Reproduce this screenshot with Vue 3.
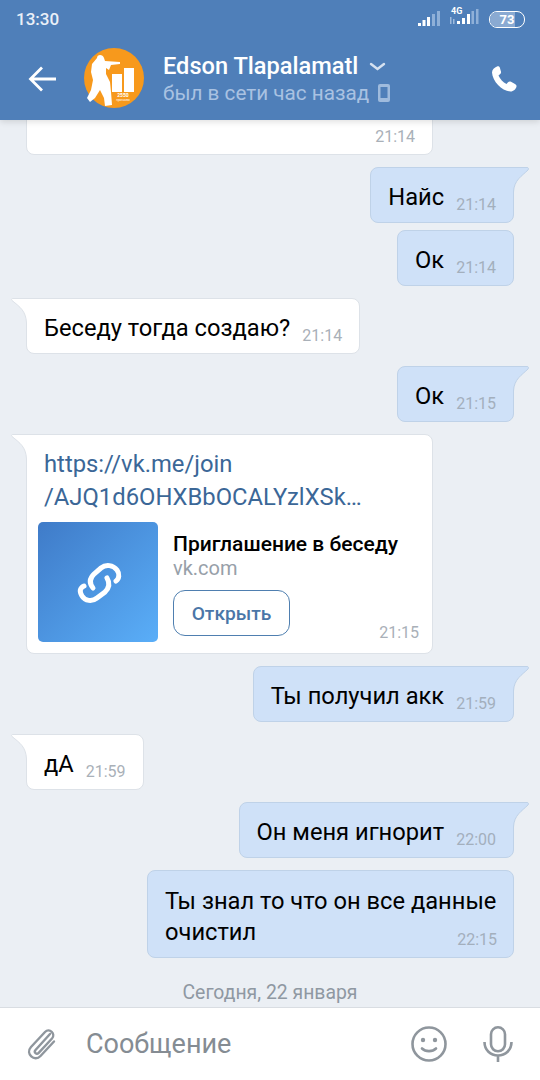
<script setup>
const messages = [
  { id: 1, side: 'in', text: '', time: '21:14', cut: true },
  { id: 2, side: 'out', text: 'Найс', time: '21:14', tail: true },
  { id: 3, side: 'out', text: 'Ок', time: '21:14', grouped: true },
  { id: 4, side: 'in', text: 'Беседу тогда создаю?', time: '21:14', tail: true },
  { id: 5, side: 'out', text: 'Ок', time: '21:15', tail: true },
  { id: 6, side: 'in', time: '21:15', tail: true, link: true },
  { id: 7, side: 'out', text: 'Ты получил акк', time: '21:59', tail: true },
  { id: 8, side: 'in', text: 'дА', time: '21:59', tail: true },
  { id: 9, side: 'out', text: 'Он меня игнорит', time: '22:00', tail: true },
  { id: 10, side: 'out', firstLine: 'Ты знал то что он все данные', text: 'очистил', time: '22:15', wrap: true }
]
</script>

<template>
<div class="screen">
  <header class="header">
    <div class="status">
      <span class="clock">13:30</span>
      <div class="status-icons">
        <svg width="22" height="16" viewBox="0 0 22 16">
          <rect x="0" y="12" width="3" height="3" fill="#fff"/>
          <rect x="4.500" y="9" width="3" height="6" fill="#fff"/>
          <rect x="9" y="6" width="3" height="9" fill="#fff"/>
          <rect x="14" y="3" width="3" height="12" fill="#8fb0d8"/>
          <rect x="19" y="0" width="3" height="15" fill="#8fb0d8"/>
        </svg>
        <div class="net">
          <span class="net-label">4G</span>
          <svg width="29" height="16" viewBox="0 0 29 16">
            <rect x="0" y="8" width="1.500" height="7" fill="#9fbbdd"/>
            <rect x="3" y="10" width="1.500" height="5" fill="#9fbbdd"/>
            <rect x="7" y="12" width="3" height="3" fill="#fff"/>
            <rect x="12" y="9" width="3" height="6" fill="#fff"/>
            <rect x="17" y="5" width="3" height="10" fill="#fff"/>
            <rect x="21.500" y="2" width="2.500" height="13" fill="#8fb0d8"/>
            <rect x="26" y="0" width="2.500" height="15" fill="#8fb0d8"/>
          </svg>
        </div>
        <div class="battery"><span class="battery-fill"></span><span class="battery-num">73</span></div>
      </div>
    </div>
    <div class="toolbar">
      <svg class="back" width="30" height="28" viewBox="0 0 30 28">
        <path d="M28 14H3M14 2.500L2.500 14L14 25.500" fill="none" stroke="#fff" stroke-width="2.800"/>
      </svg>
      <svg class="avatar" width="60" height="60" viewBox="0 0 60 60">
        <circle cx="30" cy="30" r="30" fill="#f7991c"/>
        <path d="M13 10C13 6 19 6 20 10L21 13L36 14L36 16L27 17L25 22L22 20L22 26L26 34L27 44L28 57L21 58L20 50L16 42L11 50L6 54L3 50L7 42L9 32L7 24L8 16Z" fill="#fff"/>
        <rect x="28" y="26" width="10" height="18" fill="#fff"/>
        <rect x="40" y="20" width="10" height="24" fill="#fff"/>
        <text x="39" y="49" class="avatar-num">2550</text>
        <text x="39" y="52.500" class="avatar-sub">прогнозы</text>
      </svg>
      <div class="peer">
        <div class="peer-name">Edson Tlapalamatl
          <svg width="17" height="9" viewBox="0 0 17 9"><path d="M2 2l6.500 5L15 2" fill="none" stroke="#d5e1f0" stroke-width="2.400" stroke-linecap="round"/></svg>
        </div>
        <div class="peer-seen">был в сети час назад
          <svg width="12" height="18" viewBox="0 0 12 18">
            <path fill-rule="evenodd" d="M2 0h8a2 2 0 0 1 2 2v14a2 2 0 0 1-2 2H2a2 2 0 0 1-2-2V2a2 2 0 0 1 2-2zM2.500 3v11h7V3z" fill="#9fbbdd"/>
          </svg>
        </div>
      </div>
      <svg class="call" width="28" height="28" viewBox="0 0 28 28">
        <path d="M7 1.500c-2.500 1-5 3-5 6 .5 9 10 18.500 18.500 19 3 0 5.500-2.500 6-5 .2-1.200-.5-2-1.500-2.600l-4-2.200c-1.200-.6-2.200-.3-3 .6l-1.500 1.700c-3.500-1.500-6.500-5-8-8.500l1.700-1.500c.9-.8 1.100-1.800.6-3l-1-3.500C9.300 1.500 8.200 1 7 1.500z" fill="#fff"/>
      </svg>
    </div>
  </header>

  <main class="list">
    <div
      v-for="m in messages"
      :key="m.id"
      class="row"
      :class="[m.side, { first: m.cut, grouped: m.grouped }]"
    >
      <div class="bubble" :class="{ 'has-tail': m.tail, 'is-link': m.link, 'is-wrap': m.wrap, 'is-cut': m.cut }">
        <svg v-if="m.tail && m.side === 'in'" class="tail tail-in" width="16" height="26" viewBox="0 0 16 26">
          <path d="M16 .5H2C.5.500 0 1.500 1 2.500 9 9 15 13 15.500 25H16z" fill="#fff"/>
          <path d="M16 .5H2C.5.500 0 1.500 1 2.500 9 9 15 13 15.500 25" fill="none" stroke="#dde2e8"/>
        </svg>
        <svg v-if="m.tail && m.side === 'out'" class="tail tail-out" width="16" height="26" viewBox="0 0 16 26">
          <path d="M0 .5h14c1.500 0 2 1 1 2.500C9 9 1 13 .5 25H0z" fill="#cfe1f8"/>
          <path d="M0 .5h14c1.500 0 2 1 1 2.500C9 9 1 13 .5 25" fill="none" stroke="#bfd2e8"/>
        </svg>

        <template v-if="m.link">
          <div class="url">https://vk.me/join<br>/AJQ1d6OHXBbOCALYzlXSk…</div>
          <div class="attach">
            <div class="thumb">
              <svg width="70" height="70" viewBox="0 0 70 70">
                <g fill="none" stroke="#fff" stroke-width="5" stroke-linecap="round">
                  <path d="M30 41C26 36 27 31 31 27L38 21C43 17 50 18 54 23C57 27 56 32 53 34"/>
                  <path d="M44 31C47 36 46 41 42 45L34 51C29 55 22 54 19 49C16 44 17 41 21 39"/>
                </g>
              </svg>
            </div>
            <div class="attach-info">
              <div class="attach-title">Приглашение в беседу</div>
              <div class="attach-host">vk.com</div>
              <div class="open-btn">Открыть</div>
            </div>
          </div>
          <span class="time link-time">{{ m.time }}</span>
        </template>
        <template v-else-if="m.wrap">
          <div class="text">{{ m.firstLine }}</div>
          <div class="last-line">
            <span class="text">{{ m.text }}</span>
            <span class="time">{{ m.time }}</span>
          </div>
        </template>
        <template v-else>
          <span class="text">{{ m.text }}</span>
          <span class="time">{{ m.time }}</span>
        </template>
      </div>
    </div>
    <div class="date">Сегодня, 22 января</div>
  </main>

  <footer class="composer">
    <svg class="clip" width="32" height="36" viewBox="0 0 32 36">
      <path d="M24 8L9.500 24c-2 2.300 1 5 3.200 2.800L26 12.500c4-4.500-2.500-11-7-6.500L5 21c-6 6.500 3.500 15.500 9.500 9L28 15.500" fill="none" stroke="#8f969d" stroke-width="2.400" stroke-linecap="round"/>
    </svg>
    <span class="placeholder">Сообщение</span>
    <svg class="smile" width="36" height="36" viewBox="0 0 36 36">
      <circle cx="18" cy="18" r="16.500" fill="none" stroke="#8f969d" stroke-width="2.600"/>
      <circle cx="12" cy="14" r="2.200" fill="#8f969d"/>
      <circle cx="24" cy="14" r="2.200" fill="#8f969d"/>
      <path d="M11 22.500c3.500 3.500 10.500 3.500 14 0" fill="none" stroke="#8f969d" stroke-width="2.600" stroke-linecap="round"/>
    </svg>
    <svg class="mic" width="30" height="36" viewBox="0 0 30 36">
      <rect x="8" y="1.300" width="14" height="24" rx="7" fill="none" stroke="#8f969d" stroke-width="2.600"/>
      <path d="M1.500 16c0 8 6 13.500 13.500 13.500S28.500 24 28.500 16M15 29.500V36" fill="none" stroke="#8f969d" stroke-width="2.600"/>
    </svg>
  </footer>
</div>
</template>

<style>
body {
  background: #ebeff4;
}
</style>

<style scoped>
.screen {
  width: 540px;
  height: 1080px;
  display: flex;
  flex-direction: column;
  font-family: Roboto, "Liberation Sans", sans-serif;
  background: #ebeff4;
  overflow: hidden;
}

.header {
  height: 120px;
  flex: none;
  background: #4f7fb9;
  box-shadow: 0 2px 6px rgba(0, 0, 0, 0.12);
  position: relative;
  z-index: 2;
}
.status {
  height: 38px;
  padding: 0 15px 0 16px;
  display: flex;
  align-items: center;
  justify-content: space-between;
}
.clock {
  color: #eaf0f8;
  font-size: 17px;
  font-weight: 500;
}
.status-icons {
  display: flex;
  align-items: center;
  gap: 10px;
}
.net {
  position: relative;
}
.net-label {
  position: absolute;
  left: 1px;
  top: -3px;
  color: #fff;
  font-size: 9px;
  font-weight: 700;
}
.battery {
  position: relative;
  width: 34px;
  height: 15px;
  border: 1px solid #fff;
  border-radius: 8px;
  overflow: hidden;
  display: flex;
  align-items: center;
  justify-content: center;
}
.battery-fill {
  position: absolute;
  left: 0;
  top: 0;
  bottom: 0;
  width: 73%;
  background: #8aaad2;
}
.battery-num {
  position: relative;
  color: #fff;
  font-size: 13px;
  font-weight: 700;
}

.toolbar {
  height: 82px;
  display: flex;
  align-items: center;
  padding: 0 22px 0 28px;
}
.back {
  flex: none;
}
.avatar {
  flex: none;
  margin-left: 26px;
  margin-top: -2px;
}
.avatar-num {
  font-size: 5px;
  font-weight: 700;
  fill: #fff;
  text-anchor: middle;
}
.avatar-sub {
  font-size: 3px;
  fill: #fff;
  text-anchor: middle;
}
.peer {
  flex: 1;
  margin-left: 19px;
}
.peer-name {
  color: #fff;
  font-size: 23.600px;
  font-weight: 500;
  line-height: 28px;
  display: flex;
  align-items: center;
  gap: 11px;
}
.peer-seen {
  color: #a9c2e2;
  font-size: 20.700px;
  line-height: 26px;
  display: flex;
  align-items: center;
  gap: 9px;
}

.list {
  flex: 1;
  min-height: 0;
  padding: 0 26px;
  overflow: hidden;
}
.row {
  display: flex;
  margin-top: 12px;
}
.row.grouped {
  margin-top: 7px;
}
.row.first {
  margin-top: -21px;
}
.row.out {
  justify-content: flex-end;
}
.bubble {
  position: relative;
  box-sizing: border-box;
  min-height: 56px;
  padding: 14px 17px 0 17px;
  border-radius: 8px;
  border: 1px solid #dde2e8;
  background: #fff;
  display: flex;
  align-items: flex-start;
  gap: 12px;
}
.row.out .bubble {
  background: #cfe1f8;
  border-color: #bfd2e8;
}
.row.in .has-tail {
  border-top-left-radius: 0;
}
.row.out .has-tail {
  border-top-right-radius: 0;
}
.is-cut {
  width: 407px;
  justify-content: flex-end;
}
.tail {
  position: absolute;
  top: -1px;
}
.tail-in {
  left: -16px;
}
.tail-out {
  right: -16px;
}
.text {
  color: #000;
  font-size: 23.700px;
  line-height: 30px;
}
.time {
  color: #a9b0b8;
  font-size: 16px;
  line-height: 20px;
  margin-top: 13px;
  white-space: nowrap;
}
.row.out .time {
  color: #a3afbd;
}
.is-wrap {
  display: block;
  width: 367px;
  height: 88px;
  padding: 15px 16px 0 17px;
}
.is-wrap .text {
  line-height: 31px;
  white-space: nowrap;
}
.last-line {
  display: flex;
  justify-content: space-between;
}

.is-link {
  width: 407px;
  height: 220px;
  display: block;
  padding: 13px 11px 0;
}
.url {
  color: #3b6797;
  font-size: 23.800px;
  line-height: 33px;
  padding-left: 6px;
  white-space: nowrap;
}
.attach {
  display: flex;
  margin-top: 8px;
}
.thumb {
  width: 120px;
  height: 120px;
  flex: none;
  border-radius: 5px;
  background: linear-gradient(135deg, #3f7bc8, #5aaef8);
  display: flex;
  align-items: center;
  justify-content: center;
}
.attach-info {
  margin-left: 15px;
  padding-top: 10px;
}
.attach-title {
  color: #000;
  font-size: 21px;
  font-weight: 500;
  line-height: 24px;
}
.attach-host {
  color: #97a0a9;
  font-size: 20px;
  line-height: 24px;
}
.open-btn {
  box-sizing: border-box;
  width: 117px;
  height: 46px;
  margin-top: 10px;
  border: 1.500px solid #4f7fb0;
  border-radius: 12px;
  color: #4a76a8;
  font-size: 19.200px;
  font-weight: 500;
  display: flex;
  align-items: center;
  justify-content: center;
}
.link-time {
  position: absolute;
  right: 13px;
  bottom: 10px;
  margin: 0;
}

.date {
  margin-top: 24px;
  text-align: center;
  color: #8f98a2;
  font-size: 19.400px;
  line-height: 22px;
}

.composer {
  height: 73px;
  flex: none;
  box-sizing: border-box;
  border-top: 1px solid #d9dde2;
  background: #fff;
  display: flex;
  align-items: center;
  padding: 0 27px 0 26px;
}
.placeholder {
  flex: 1;
  margin-left: 28px;
  color: #858c93;
  font-size: 27px;
}
.mic {
  margin-left: 36px;
}
</style>
